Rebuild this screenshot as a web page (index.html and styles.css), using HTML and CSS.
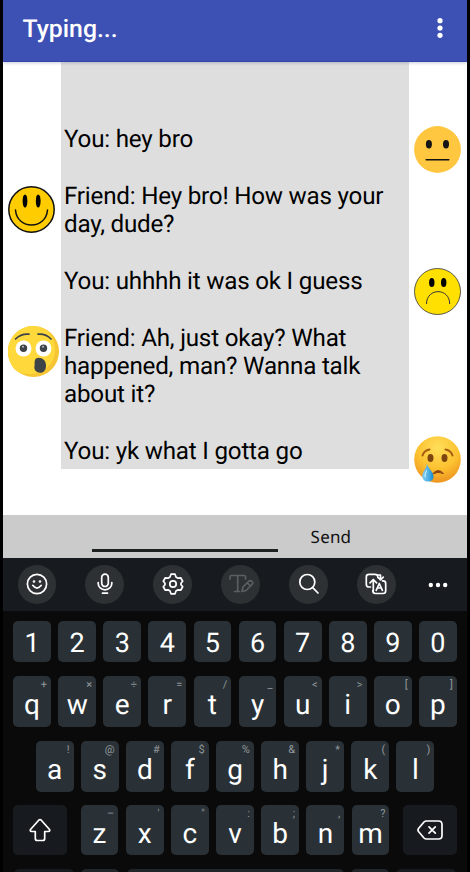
FILE: index.html
```html
<!DOCTYPE html>
<html lang="en">
<head>
    <meta charset="UTF-8">
    <meta name="viewport" content="width=device-width, initial-scale=1">
    <title>Typing...</title>
    <link rel="stylesheet" href="styles.css">
</head>
<body>
<div class="phone">
    <header class="app-bar">
        <h1>Typing...</h1>
        <svg class="menu" viewBox="0 0 6 20" fill="#fff">
            <circle cx="3" cy="2.7" r="2.6"/><circle cx="3" cy="10" r="2.6"/><circle cx="3" cy="17.3" r="2.6"/>
        </svg>
    </header>

    <main class="chat">
        <div class="faces friend-faces">
            <svg class="face smile" viewBox="0 0 47 47">
                <circle cx="23.5" cy="23.5" r="22.7" fill="#fc0" stroke="#111" stroke-width="1.5"/>
                <ellipse cx="17" cy="15" rx="2.4" ry="6.6"/>
                <ellipse cx="30.2" cy="15" rx="2.4" ry="6.6"/>
                <path d="M7.5 24C9 44 38 44 39.5 24" fill="none" stroke="#111" stroke-width="1.5" stroke-linecap="round"/>
            </svg>
            <svg class="face shocked" viewBox="0 0 51 51">
                <circle cx="25.5" cy="25.5" r="25.5" fill="#f6c534"/>
                <path d="M24 0C39 0 47 11 47 23C47 38 36 48 21 48C12 48 6 45 3 38A25.5 25.5 0 0 1 24 0Z" fill="#ffd93b"/>
                <path d="M7.5 13Q13 7.5 21 8.2M30 8.2Q38 7.5 43 13" fill="none" stroke="#3e4347" stroke-width="1.7" stroke-linecap="round"/>
                <circle cx="15.5" cy="22.5" r="8" fill="#fff"/>
                <circle cx="35.5" cy="22.5" r="8" fill="#fff"/>
                <circle cx="15.5" cy="22.2" r="3.7" fill="#3e4347"/>
                <circle cx="35.5" cy="22.2" r="3.7" fill="#3e4347"/>
                <circle cx="15" cy="20.8" r="1" fill="#b9bdc1"/>
                <circle cx="35" cy="20.8" r="1" fill="#b9bdc1"/>
                <path d="M27 34C28 31 33 31 36 34C39 37 39 45 34 46.5C29 47.5 25.5 44 26.5 40C27 38 26 37 27 34Z" fill="#3e4347"/>
            </svg>
        </div>

        <div class="transcript">
            <p>You: hey bro</p>
            <p>Friend: Hey bro! How was your<br>day, dude?</p>
            <p>You: uhhhh it was ok I guess</p>
            <p>Friend: Ah, just okay? What<br>happened, man? Wanna talk<br>about it?</p>
            <p>You: yk what I gotta go</p>
        </div>

        <div class="faces my-faces">
            <svg class="face neutral" viewBox="0 0 47 47">
                <circle cx="23.5" cy="23.5" r="23.4" fill="#ffc640"/>
                <ellipse cx="14.9" cy="18.3" rx="3" ry="4.2" fill="#151515"/>
                <ellipse cx="32" cy="18.3" rx="3" ry="4.2" fill="#151515"/>
                <path d="M12.2 33.7H34.8" stroke="#111" stroke-width="1.5" stroke-linecap="round"/>
            </svg>
            <svg class="face sad" viewBox="0 0 47 47">
                <circle cx="23.5" cy="23.5" r="23" fill="#ffe000" stroke="#333" stroke-width=".8"/>
                <ellipse cx="17.8" cy="14.6" rx="2.7" ry="4.5"/>
                <ellipse cx="29.7" cy="14.6" rx="2.7" ry="4.5"/>
                <path d="M12.5 36C12.5 19.5 35.7 19.5 35.7 36" fill="none" stroke="#333" stroke-width="1"/>
            </svg>
            <svg class="face crying" viewBox="0 0 47 47">
                <defs>
                    <radialGradient id="skin" cx=".5" cy=".25" r=".75">
                        <stop offset="0" stop-color="#ffdf5a"/>
                        <stop offset=".6" stop-color="#fcc130"/>
                        <stop offset="1" stop-color="#ed9420"/>
                    </radialGradient>
                    <linearGradient id="tear" x1="0" y1="0" x2="1" y2="0">
                        <stop offset="0" stop-color="#7bcaf2"/>
                        <stop offset=".5" stop-color="#55b4e8"/>
                        <stop offset="1" stop-color="#168bd0"/>
                    </linearGradient>
                </defs>
                <circle cx="23.5" cy="23.5" r="23.3" fill="url(#skin)"/>
                <path d="M8.5 19.5Q10 14.5 15.5 13.5M31.5 13.5Q37 14.5 38.5 19.5" fill="none" stroke="#a65d10" stroke-width="2" stroke-linecap="round"/>
                <ellipse cx="16.5" cy="22" rx="3" ry="4" fill="#7d4610"/>
                <ellipse cx="30.5" cy="22" rx="3" ry="4" fill="#7d4610"/>
                <path d="M18.5 38Q24 31.5 29.5 37.5Q24 35 18.5 38Z" fill="#8a4410" stroke="#8a4410" stroke-width="1"/>
                <path d="M12.8 27.5C14.5 33 19.5 36 19.5 40.5C19.5 44 17 45.5 14 45.5C10.5 45.5 8.3 43.5 8.3 40C8.3 35 13 33 12.8 27.5Z" fill="url(#tear)"/>
                <path d="M12.5 35Q10.5 38 11.2 41" fill="none" stroke="#c9efff" stroke-width="1.2" stroke-linecap="round"/>
            </svg>
        </div>
    </main>

    <div class="compose">
        <div class="message-input"></div>
        <span class="send">Send</span>
    </div>

    <div class="keyboard">
        <div class="toolbar">
            <div class="tool">
                <svg viewBox="0 0 22 22">
                    <circle cx="11" cy="11" r="9.6"/>
                    <path d="M6.7 12.3Q11 17.8 15.3 12.3"/>
                    <circle cx="8" cy="8.5" r=".5" class="solid"/><circle cx="14" cy="8.5" r=".5" class="solid"/>
                </svg>
            </div>
            <div class="tool">
                <svg viewBox="0 0 22 22">
                    <rect x="7.7" y="1.2" width="6.6" height="12.3" rx="3.3"/>
                    <path d="M4.2 9.5V10.5A6.8 6.3 0 0 0 17.8 10.5V9.5M8.5 20.2H13.5"/>
                </svg>
            </div>
            <div class="tool">
                <svg viewBox="0 0 22 22">
                    <path d="M9 1.2H13L14 4L16 5.2L18.7 4.8L20.7 8.2L19 10.3V11.7L20.7 13.8L18.7 17.2L16 16.8L14 18L13 20.8H9L8 18L6 16.8L3.3 17.2L1.3 13.8L3 11.7V10.3L1.3 8.2L3.3 4.8L6 5.2L8 4Z"/>
                    <circle cx="11" cy="11" r="3.2"/>
                </svg>
            </div>
            <div class="tool disabled">
                <svg class="wide" viewBox="0 0 26 22">
                    <path d="M2 6V4Q2 2.5 3.5 2.5H16Q17.5 2.5 17.5 4V6M9.7 2.5V18.5M6.5 18.5H11.5M14 18.5L15 14L21 8Q22.5 7 24 8.5Q25.500 10 24 11.5L18 17.5ZM19.5 10L22 12.5"/>
                </svg>
            </div>
            <div class="tool">
                <svg viewBox="0 0 22 22">
                    <circle cx="9.3" cy="9" r="7.5"/>
                    <path d="M14.7 14.7L20 20"/>
                </svg>
            </div>
            <div class="tool">
                <svg viewBox="0 0 22 22">
                    <path d="M5.5 14H4Q1.3 14 1.3 11.3V4Q1.3 1.3 4 1.3H10Q12.8 1.3 12.8 3.8V4.5M7.8 17.5Q7.8 20.5 10.5 20.5H18Q20.7 20.5 20.7 17.8V10.5Q20.7 7.8 18 7.8H17.5M12.5 2H15.5V6.5M12.8 4.2L15.5 6.8L18.3 4.2M8.3 17.5V7M5 9.8L8.3 6.5L11.6 9.8M11.2 17.3L14.3 10.5L17.4 17.3M12.5 15H16.2"/>
                </svg>
            </div>
            <svg class="more" viewBox="0 0 20 6" fill="#fff">
                <circle cx="2.8" cy="3" r="2.2"/><circle cx="10" cy="3" r="2.2"/><circle cx="17.2" cy="3" r="2.2"/>
            </svg>
        </div>

        <div class="keys">
            <div class="row numbers">
                <div class="key">1</div>
                <div class="key">2</div>
                <div class="key">3</div>
                <div class="key">4</div>
                <div class="key">5</div>
                <div class="key">6</div>
                <div class="key">7</div>
                <div class="key">8</div>
                <div class="key">9</div>
                <div class="key">0</div>
            </div>
            <div class="row">
                <div class="key">q<sup>+</sup></div>
                <div class="key">w<sup>×</sup></div>
                <div class="key">e<sup>÷</sup></div>
                <div class="key">r<sup>=</sup></div>
                <div class="key">t<sup>/</sup></div>
                <div class="key">y<sup>_</sup></div>
                <div class="key">u<sup>&lt;</sup></div>
                <div class="key">i<sup>&gt;</sup></div>
                <div class="key">o<sup>[</sup></div>
                <div class="key">p<sup>]</sup></div>
            </div>
            <div class="row">
                <div class="key">a<sup>!</sup></div>
                <div class="key">s<sup>@</sup></div>
                <div class="key">d<sup>#</sup></div>
                <div class="key">f<sup>$</sup></div>
                <div class="key">g<sup>%</sup></div>
                <div class="key">h<sup>&amp;</sup></div>
                <div class="key">j<sup>*</sup></div>
                <div class="key">k<sup>(</sup></div>
                <div class="key">l<sup>)</sup></div>
            </div>
            <div class="row shift-row">
                <div class="key special shift">
                    <svg viewBox="0 0 22 24">
                        <path d="M9.7 2.2Q11 1 12.3 2.2L20.3 11.2Q21.5 13.3 19.2 13.5H15.7V20.5Q15.7 22.5 13.7 22.5H8.3Q6.3 22.5 6.3 20.5V13.5H2.8Q.5 13.3 1.7 11.2Z"/>
                    </svg>
                </div>
                <div class="key">z<sup>–</sup></div>
                <div class="key">x<sup>'</sup></div>
                <div class="key">c<sup>"</sup></div>
                <div class="key">v<sup>:</sup></div>
                <div class="key">b<sup>;</sup></div>
                <div class="key">n<sup>,</sup></div>
                <div class="key">m<sup>?</sup></div>
                <div class="key special backspace">
                    <svg viewBox="0 0 26 20">
                        <path d="M9.5 1H21.5Q25 1 25 4.5V15.5Q25 19 21.5 19H9.5Q8 19 7 18L1.5 11.5Q.5 10 1.5 8.5L7 2Q8 1 9.5 1ZM12 6.8L18.3 13.2M18.3 6.8L12 13.2"/>
                    </svg>
                </div>
            </div>
            <div class="row bottom-row">
                <div class="key special symbols"></div>
                <div class="key"></div>
                <div class="key space"></div>
                <div class="key"></div>
                <div class="key special enter"></div>
            </div>
        </div>
    </div>
</div>
</body>
</html>
```
FILE: styles.css
```css
* {
    box-sizing: border-box;
    margin: 0;
    padding: 0;
}

body {
    background-color: #000;
    font-family: Roboto, sans-serif;
    text-rendering: geometricPrecision;
    height: 872px;
    overflow: hidden;
}

.phone {
    width: 464px;
    height: 872px;
    margin: 0 auto;
    display: flex;
    flex-direction: column;
    overflow: hidden;
}

.app-bar {
    height: 62px;
    flex: none;
    display: flex;
    justify-content: space-between;
    padding: 14px 24px 0 19.5px;
    background-color: #3d50b4;
    border-bottom: 1px solid #3545a8;
    box-shadow: 0 1px 3px rgba(40, 50, 120, 0.25);
    position: relative;
}

h1 {
    font-size: 24.8px;
    font-weight: 500;
    line-height: 32px;
    color: #fff;
}

.menu {
    width: 6px;
    height: 20px;
    margin-top: 4px;
}

/* chat */

.chat {
    height: 453px;
    flex: none;
    display: grid;
    grid-template-columns: 58px 348px 58px;
    background-color: #fff;
}

.transcript {
    height: 407px;
    padding: 63px 0 0 3px;
    background-color: #dedede;
    color: #000;
    font-size: 24.2px;
    line-height: 28.36px;
    letter-spacing: -0.21px;
    white-space: nowrap;
}

.transcript p {
    margin-bottom: 28.36px;
}

.faces {
    display: flex;
    flex-direction: column;
    padding-left: 5.4px;
}

.face {
    width: 47px;
    height: 47px;
    flex: none;
}

.friend-faces {
    padding-top: 124px;
}

.shocked {
    width: 51px;
    height: 51px;
    margin-top: 93px;
}

.my-faces {
    padding-top: 64px;
}

.sad {
    margin-top: 95px;
}

.crying {
    margin-top: 121px;
}

.compose {
    height: 43px;
    flex: none;
    display: flex;
    padding-left: 89px;
    background-color: #cbcbcb;
}

.message-input {
    width: 186px;
    height: 37px;
    border-bottom: 3px solid #1c211f;
}

.send {
    margin-left: 32.6px;
    font-family: "Noto Sans", sans-serif;
    font-size: 17px;
    line-height: 44px;
    letter-spacing: 0.2px;
    color: #111;
}

/* keyboard */

.keyboard {
    flex: 1;
    background-color: #0a0a0a;
}

.toolbar {
    height: 53px;
    display: flex;
    align-items: center;
    gap: 29.1px;
    padding-left: 14.6px;
    background-color: #171b1f;
}

.tool {
    width: 38.8px;
    height: 38.8px;
    flex: none;
    display: flex;
    align-items: center;
    justify-content: center;
    border-radius: 50%;
    background-color: #2d3134;
}

.tool svg {
    width: 22px;
    height: 22px;
}

.tool svg.wide {
    width: 26px;
}

.tool svg,
.special svg {
    fill: none;
    stroke: #fff;
    stroke-width: 1.7;
    stroke-linecap: round;
    stroke-linejoin: round;
}

.tool .solid {
    fill: #fff;
}

.tool.disabled svg {
    stroke: #5b5f62;
}

.more {
    width: 20px;
    height: 6px;
    margin-left: 3px;
}

.keys {
    padding: 10px 10px 0;
}

.row {
    display: flex;
    justify-content: center;
    gap: 7.3px;
    height: 51px;
    margin-bottom: 14px;
}

.row.numbers {
    height: 41px;
}

.key {
    width: 37.8px;
    flex: none;
    display: flex;
    justify-content: center;
    position: relative;
    border-radius: 5px;
    background-color: #293136;
    color: #fff;
    font-size: 28px;
    line-height: 57px;
}

.numbers .key {
    font-size: 27px;
    line-height: 45px;
}

.key sup {
    position: absolute;
    top: 2px;
    right: 4px;
    font-size: 11px;
    line-height: 14px;
    color: #90969a;
}

.special {
    width: 54px;
    align-items: center;
    background-color: #171b1f;
}

.shift {
    margin-right: 6px;
}

.backspace {
    margin-left: 6px;
}

.shift svg {
    width: 22px;
    height: 24px;
}

.backspace svg {
    width: 26px;
    height: 20px;
}

.row.shift-row {
    gap: 7.4px;
    height: 50px;
    margin-top: -1px;
}

.bottom-row .key {
    background-color: #202529;
}

.bottom-row .symbols,
.bottom-row .enter {
    width: 60px;
    background-color: #171b1f;
}

.bottom-row .space {
    width: 217px;
}
```
